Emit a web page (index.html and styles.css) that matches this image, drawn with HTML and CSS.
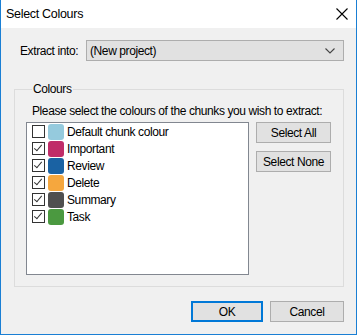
FILE: index.html
```html
<!DOCTYPE html>
<html>
<head>
  <title>Select Colours</title>
  <link rel="stylesheet" href="styles.css">
</head>
<body>
<div class="window">
  <div class="titlebar">
    <span class="title">Select Colours</span>
    <svg class="close" width="12" height="12" viewBox="0 0 12 12"><path d="M0.5 0.5 L11.5 11.5 M11.5 0.5 L0.5 11.5" stroke="#000" stroke-width="1.1" fill="none"/></svg>
  </div>
  <div class="content">
    <div class="extract">
      <span class="label">Extract into:</span>
      <div class="combo">
        <span>(New project)</span>
        <svg width="10" height="6" viewBox="0 0 10 6"><path d="M0.5 0.5 L5 5 L9.5 0.5" stroke="#444" stroke-width="1.1" fill="none"/></svg>
      </div>
    </div>

    <fieldset class="group">
      <legend>Colours</legend>
      <div class="prompt">Please select the colours of the chunks you wish to extract:</div>
      <div class="grouprow">
        <div class="list">
          <div class="item"><span class="check"></span><span class="swatch" style="background:#95cadd"></span>Default chunk colour</div>
          <div class="item"><span class="check on"></span><span class="swatch" style="background:#c02c68"></span>Important</div>
          <div class="item"><span class="check on"></span><span class="swatch" style="background:#1a62a3"></span>Review</div>
          <div class="item"><span class="check on"></span><span class="swatch" style="background:#f5a73e"></span>Delete</div>
          <div class="item"><span class="check on"></span><span class="swatch" style="background:#4f4f4f"></span>Summary</div>
          <div class="item"><span class="check on"></span><span class="swatch" style="background:#4b9940"></span>Task</div>
        </div>
        <div class="side">
          <div class="button">Select All</div>
          <div class="button">Select None</div>
        </div>
      </div>
    </fieldset>

    <div class="footer">
      <div class="button ok">OK</div>
      <div class="button cancel">Cancel</div>
    </div>
  </div>
</div>
</body>
</html>
```

FILE: styles.css
```css
BODY {
    margin : 0;
    background : #ffffff;
    font-family : "Liberation Sans", Arial, sans-serif;
    font-size : 12px;
    letter-spacing : -0.4px;
    color : #000;
}
.window {
    width : 355px;
    height : 334px;
    border : 1px solid #1a7fd4;
    border-top : none;
    background : #f0f0f0;
}
.titlebar {
    height : 28px;
    background : #ffffff;
    display : flex;
    align-items : center;
    justify-content : space-between;
}
.title {
    margin-left : 5px;
    font-size : 12.5px;
    letter-spacing : -0.3px;
}
.close {
    margin-right : 8px;
}
.content {
    padding : 12px 12px 0 13px;
}
.extract {
    display : flex;
    align-items : center;
    padding-left : 6px;
}
.label {
    width : 66px;
}
.combo {
    flex : 1;
    height : 19px;
    border : 1px solid #adadad;
    background : #e1e1e1;
    display : flex;
    align-items : center;
    justify-content : space-between;
    padding : 0 8px 0 3px;
}
.group {
    margin : 21px 0 0 0;
    padding : 4px 0 11px 11px;
    border : 1px solid #dcdcdc;
}
.group legend {
    padding : 0 1px;
    margin-left : 6px;
}
.prompt {
    padding : 4px 0 0 6px;
    height : 18px;
    white-space : nowrap;
}
.grouprow {
    display : flex;
    align-items : flex-start;
}
.list {
    width : 221px;
    height : 151px;
    border : 1px solid #828790;
    background : #ffffff;
}
.item {
    height : 17px;
    display : flex;
    align-items : center;
}
.check {
    width : 11px;
    height : 11px;
    border : 1px solid #333333;
    background : #ffffff;
    margin-left : 5px;
    margin-right : 3px;
    position : relative;
}
.check.on::after {
    content : "";
    position : absolute;
    left : 3px;
    top : 0px;
    width : 3px;
    height : 7px;
    border : solid #333;
    border-width : 0 1px 1px 0;
    transform : rotate(40deg);
}
.swatch {
    width : 16px;
    height : 16px;
    border-radius : 3px;
    margin-right : 3px;
}
.side {
    margin-left : 7px;
    display : flex;
    flex-direction : column;
    gap : 8px;
}
.button {
    width : 73px;
    height : 19px;
    border : 1px solid #adadad;
    background : #e1e1e1;
    display : flex;
    align-items : center;
    justify-content : center;
}
.footer {
    display : flex;
    justify-content : flex-end;
    gap : 7px;
    margin-top : 14px;
}
.ok {
    width : 68px;
    height : 17px;
    border : 2px solid #0078d7;
}
.cancel {
    width : 72px;
}
```
